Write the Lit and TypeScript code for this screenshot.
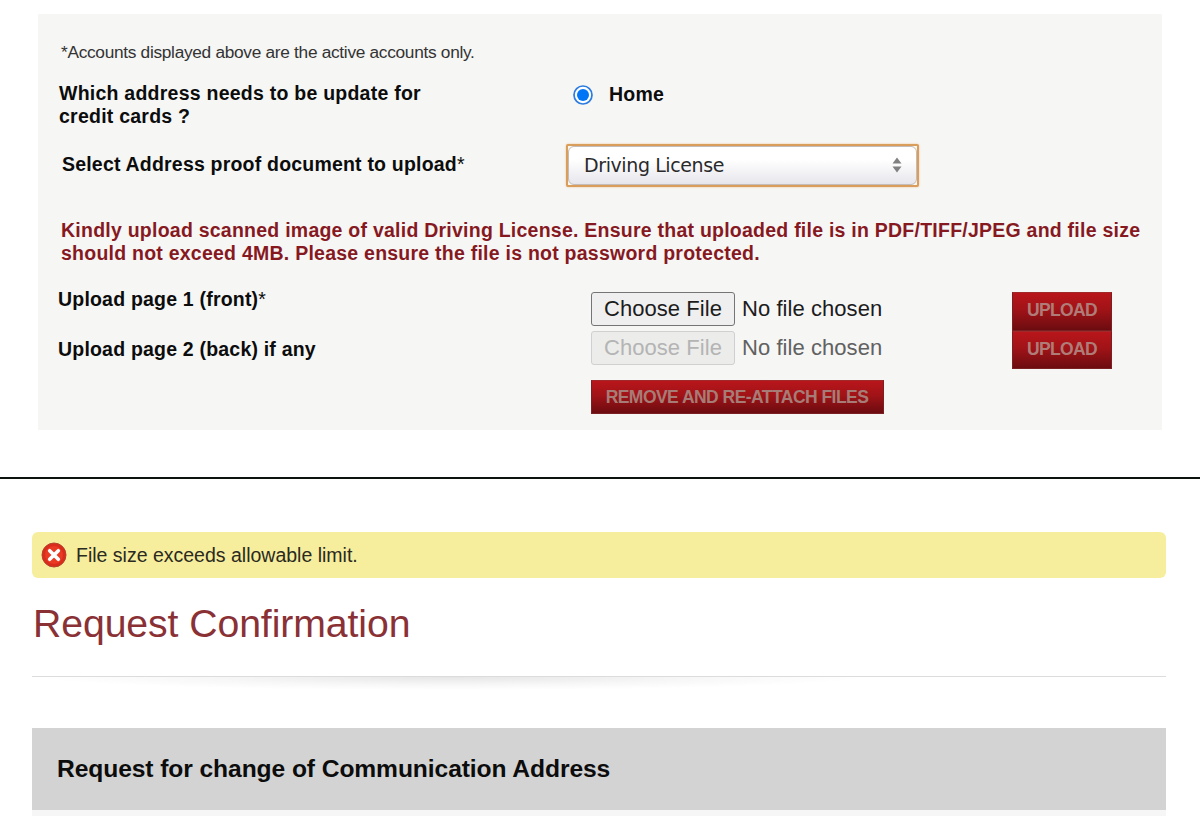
import { LitElement, html, css } from "lit";
import { customElement, property } from "lit/decorators.js";
import { classMap } from "lit/directives/class-map.js";

@customElement("file-picker")
class FilePicker extends LitElement {
  @property({ type: Boolean }) disabled = false;

  static styles = css`
    :host {
      display: flex;
      align-items: flex-start;
      font: 22px/34.5px "Liberation Sans", Arial, sans-serif;
      color: #1c1c1c;
      white-space: nowrap;
    }
    .choose {
      box-sizing: border-box;
      width: 144px;
      height: 34.5px;
      margin: 0 7px 0 0;
      padding: 0 0 1px;
      border: 1.4px solid #757575;
      border-radius: 3px;
      background: #efefef;
      color: #1c1c1c;
      font: inherit;
      line-height: 31px;
      letter-spacing: 0.06px;
    }
    .choose.off {
      border-color: #d0d0d0;
      background: #ececeb;
      color: #b4b4b4;
    }
    .status {
      letter-spacing: 0.06px;
      line-height: 33px;
    }
    .status.off {
      color: #616161;
    }
  `;

  render() {
    const off = { off: this.disabled };
    return html`
      <button class=${classMap({ choose: true, ...off })} ?disabled=${this.disabled}>Choose File</button>
      <span class=${classMap({ status: true, ...off })}>No file chosen</span>
    `;
  }
}

@customElement("app-root")
class AppRoot extends LitElement {
  static styles = css`
    :host {
      display: flex;
      flex-direction: column;
      height: 831px;
      overflow: hidden;
      background: #fff;
      font-family: "Liberation Sans", Arial, sans-serif;
      color: #0c0c0c;
      white-space: nowrap;
    }
    .panel {
      box-sizing: border-box;
      width: 1124px;
      height: 416px;
      margin: 14px 0 0 38px;
      padding-top: 27px;
      background: #f6f6f5;
    }
    .note {
      margin: 0 0 19px 23px;
      font-size: 17.3px;
      line-height: 22px;
      letter-spacing: -0.3px;
      color: #333;
    }
    .bold {
      font-size: 19.5px;
      line-height: 22.6px;
      font-weight: bold;
      letter-spacing: 0.24px;
    }
    .row {
      display: grid;
      grid-template-columns: 528px 1fr;
      align-items: start;
    }
    .address {
      height: 61.5px;
      padding-left: 21px;
    }
    .proof {
      height: 43.5px;
      padding-left: 24px;
      grid-template-columns: 504px 1fr;
    }
    .proof .bold {
      padding-top: 9px;
      letter-spacing: 0.2px;
    }
    .star {
      font-weight: normal;
    }
    .option {
      display: flex;
      align-items: flex-start;
      gap: 16px;
      padding-top: 1px;
      margin-left: -14px;
    }
    .radio {
      flex: none;
      width: 20px;
      height: 20px;
      margin-top: 2px;
    }
    .select {
      box-sizing: border-box;
      width: 353px;
      height: 43.5px;
      border: 2.5px solid #d99e5c;
      border-radius: 2px;
      background: #fbf7ee;
      box-shadow: 0 0 2px #eebf85;
    }
    .field {
      box-sizing: border-box;
      display: flex;
      align-items: center;
      justify-content: space-between;
      height: 100%;
      padding: 0 14px 0 15px;
      border: 1px solid #c4bcb8;
      border-radius: 6px;
      background: linear-gradient(#fff 0%, #fff 35%, #e6e6ec 100%);
      font: 19px/30px "DejaVu Sans", Verdana, sans-serif;
      letter-spacing: -0.4px;
      color: #2a2a2a;
    }
    .arrows {
      width: 10px;
      height: 16px;
    }
    .notice {
      margin: 32.2px 0 27.6px 23px;
      color: #86191f;
    }
    .uploads {
      display: grid;
      grid-template-columns: 533px 421px 100px;
      grid-template-rows: 39px 38px;
      margin-left: 20px;
      align-items: start;
    }
    .uploads .bold {
      letter-spacing: 0.2px;
    }
    .front {
      margin-top: -4px;
    }
    .back {
      padding-top: 7px;
    }
    .action {
      box-sizing: border-box;
      height: 100%;
      margin: 0;
      padding: 0 0 2px;
      border: 1px solid #7a2022;
      border-top-color: #a02a2a;
      background: linear-gradient(#b8161b, #a01317 45%, #6c0c10);
      color: #b07c78;
      font: bold 17.5px/34px "Liberation Sans", Arial, sans-serif;
      letter-spacing: -0.65px;
    }
    .remove {
      display: block;
      width: 293px;
      height: 34.5px;
      margin: 11px 0 0 552.5px;
      padding: 0;
      line-height: 30px;
      color: #a87c76;
      letter-spacing: -0.54px;
    }
    .rule {
      flex: none;
      height: 2px;
      margin-top: 47px;
      background: #0d120f;
    }
    .alert {
      flex: none;
      box-sizing: border-box;
      display: flex;
      align-items: center;
      gap: 9px;
      width: 1134px;
      height: 45.5px;
      margin: 53px 0 0 32px;
      padding: 0 0 0 9px;
      border-radius: 6px;
      background: #f6ed9d;
      font-size: 19.5px;
      line-height: 24px;
      color: #2b2a1e;
    }
    .error {
      width: 26px;
      height: 26px;
    }
    h1 {
      margin: 24.5px 0 0 33px;
      font-size: 39.2px;
      line-height: 44px;
      font-weight: normal;
      letter-spacing: -0.08px;
      color: #8a3136;
    }
    .divider {
      flex: none;
      width: 1134px;
      height: 14px;
      margin: 29.5px 0 0 32px;
      border-top: 1.5px solid #dcdcdc;
      background: radial-gradient(ellipse 410px 13px at 37% 0, #e6e6e6, #f7f7f7 60%, #fff);
    }
    .heading {
      flex: none;
      box-sizing: border-box;
      width: 1134px;
      height: 88px;
      margin: 37px 0 0 32px;
      padding-left: 25px;
      border-bottom: 6px solid #f6f6f6;
      background: #d3d3d3;
      background-clip: padding-box;
      font-size: 24.6px;
      line-height: 81px;
      font-weight: bold;
      letter-spacing: -0.08px;
    }
  `;

  render() {
    return html`
      <section class="panel">
        <div class="note">*Accounts displayed above are the active accounts only.</div>
        <div class="row address">
          <div class="bold">Which address needs to be update for<br />credit cards ?</div>
          <div class="option bold">
            <svg class="radio" viewBox="0 0 20 20">
              <circle cx="10" cy="10" r="9" fill="#fff" stroke="#2c7be0" stroke-width="1.7" />
              <circle cx="10" cy="10" r="6" fill="#0075f5" />
            </svg>
            <span>Home</span>
          </div>
        </div>
        <div class="row proof">
          <div class="bold">Select Address proof document to upload<span class="star">*</span></div>
          <div class="select">
            <div class="field">
              <span>Driving License</span>
              <svg class="arrows" viewBox="0 0 10 16">
                <path d="M5 0.5 9.5 6.5H0.5Z M5 15.5 0.5 9.5H9.5Z" fill="#808080" />
              </svg>
            </div>
          </div>
        </div>
        <div class="bold notice">
          Kindly upload scanned image of valid Driving License. Ensure that uploaded file is in PDF/TIFF/JPEG and file size<br />should not exceed 4MB. Please ensure the file is not password protected.
        </div>
        <div class="uploads">
          <div class="bold front">Upload page 1 (front)<span class="star">*</span></div>
          <file-picker></file-picker>
          <button class="action">UPLOAD</button>
          <div class="bold back">Upload page 2 (back) if any</div>
          <file-picker disabled></file-picker>
          <button class="action">UPLOAD</button>
        </div>
        <button class="action remove">REMOVE AND RE-ATTACH FILES</button>
      </section>
      <div class="rule"></div>
      <div class="alert">
        <svg class="error" viewBox="0 0 26 26">
          <circle cx="13" cy="13" r="12" fill="#d92c1c" stroke="#b5432c" stroke-width="1" />
          <circle cx="13" cy="13" r="9" fill="#ea3a24" />
          <path d="M8.7 8.7 17.3 17.3M17.3 8.7 8.7 17.3" stroke="#fff" stroke-width="3.6" stroke-linecap="round" />
        </svg>
        <span>File size exceeds allowable limit.</span>
      </div>
      <h1>Request Confirmation</h1>
      <div class="divider"></div>
      <div class="heading">Request for change of Communication Address</div>
    `;
  }
}
